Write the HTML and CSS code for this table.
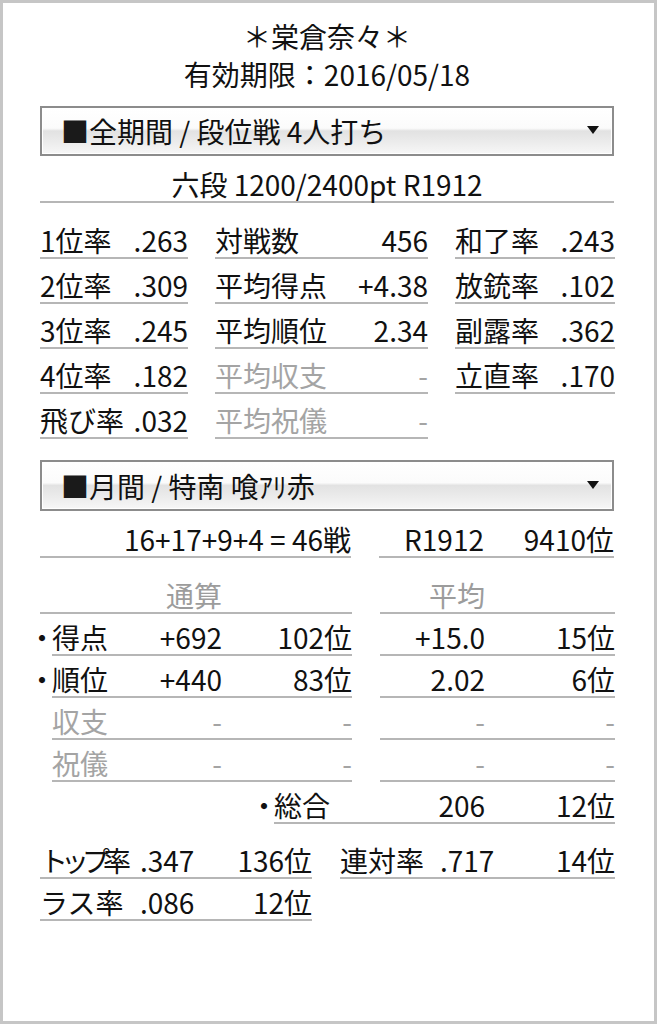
FILE: index.html
```html
<!DOCTYPE html>
<html lang="ja">
<head>
<meta charset="utf-8">
<title>成績</title>
<link rel="stylesheet" href="styles.css">
</head>
<body>
<div class="panel">
  <div class="head">
    <div class="line">＊棠倉奈々＊</div>
    <div class="line">有効期限：2016/05/18</div>
  </div>

  <div class="select s1">
    <span class="sq">■</span><span class="sel-text">全期間 / 段位戦 4人打ち</span>
    <svg class="arrow" width="12" height="8" viewBox="0 0 12 8"><path d="M0 0H12L6 8Z" fill="#111"/></svg>
  </div>

  <div class="rank">六段 1200/2400pt R1912</div>

  <div class="stats">
    <div class="cell"><span>1位率</span><span>.263</span></div>
    <div class="cell"><span>対戦数</span><span>456</span></div>
    <div class="cell"><span>和了率</span><span>.243</span></div>

    <div class="cell"><span>2位率</span><span>.309</span></div>
    <div class="cell"><span>平均得点</span><span>+4.38</span></div>
    <div class="cell"><span>放銃率</span><span>.102</span></div>

    <div class="cell"><span>3位率</span><span>.245</span></div>
    <div class="cell"><span>平均順位</span><span>2.34</span></div>
    <div class="cell"><span>副露率</span><span>.362</span></div>

    <div class="cell"><span>4位率</span><span>.182</span></div>
    <div class="cell off"><span>平均収支</span><span>-</span></div>
    <div class="cell"><span>立直率</span><span>.170</span></div>

    <div class="cell"><span>飛び率</span><span>.032</span></div>
    <div class="cell off"><span>平均祝儀</span><span>-</span></div>
    <div class="cell blank"></div>
  </div>

  <div class="select s2">
    <span class="sq">■</span><span class="sel-text">月間 / 特南 喰ｱﾘ赤</span>
    <svg class="arrow" width="12" height="8" viewBox="0 0 12 8"><path d="M0 0H12L6 8Z" fill="#111"/></svg>
  </div>

  <div class="month">
    <div class="mrow r-games">
      <div class="seg games">16+17+9+4 = 46戦</div>
      <div class="seg right"><span>R1912</span><span>9410位</span></div>
    </div>

    <div class="mrow r-head">
      <div class="seg left wide"><span></span><span class="hd">通算</span><span></span></div>
      <div class="seg right"><span class="hd">平均</span><span></span></div>
    </div>

    <div class="mrow r-data">
      <div class="seg left"><span><span class="dot">・</span>得点</span><span>+692</span><span>102位</span></div>
      <div class="seg right"><span>+15.0</span><span>15位</span></div>
    </div>

    <div class="mrow r-data">
      <div class="seg left"><span><span class="dot">・</span>順位</span><span>+440</span><span>83位</span></div>
      <div class="seg right"><span>2.02</span><span>6位</span></div>
    </div>

    <div class="mrow r-data off">
      <div class="seg left"><span>収支</span><span>-</span><span>-</span></div>
      <div class="seg right"><span>-</span><span>-</span></div>
    </div>

    <div class="mrow r-data off">
      <div class="seg left"><span>祝儀</span><span>-</span><span>-</span></div>
      <div class="seg right"><span>-</span><span>-</span></div>
    </div>

    <div class="mrow r-data">
      <div class="seg total"><span><span class="dot">・</span>総合</span><span>206</span><span>12位</span></div>
    </div>

    <div class="mrow r-top">
      <div class="seg rate"><span class="tight">トップ率</span><span>.347</span><span>136位</span></div>
      <div class="seg rate rate-r"><span>連対率</span><span>.717</span><span>14位</span></div>
    </div>

    <div class="mrow r-data">
      <div class="seg rate"><span>ラス率</span><span>.086</span><span>12位</span></div>
    </div>
  </div>
</div>
</body>
</html>
```

FILE: styles.css
```css
* {
  box-sizing: border-box;
}

html, body {
  margin: 0;
  padding: 0;
  background: #fff;
}

body {
  font-family: "Noto Sans CJK JP", "Noto Sans CJK SC", sans-serif;
  font-size: 28px;
  color: #111;
}

.panel {
  width: 657px;
  height: 1024px;
  border: 3px solid #c6c6c6;
  padding: 0 40px 0 37px;
  overflow: hidden;
}

.head {
  padding-top: 14px;
  text-align: center;
}

.head .line {
  line-height: 38px;
  height: 38px;
}

.select {
  display: flex;
  align-items: center;
  height: 50px;
  border: 2px solid #8c8c8c;
  box-shadow: inset 0 0 0 1px #fff;
  background: linear-gradient(to bottom, #ffffff 0%, #fbfbfb 44%, #e2e2e2 50%, #ececec 75%, #f7f7f7 100%);
  padding: 0 13px 0 19px;
  line-height: 30px;
  white-space: nowrap;
}

.s1 {
  margin-top: 13px;
}

.s2 {
  margin-top: 21px;
  height: 51px;
}

.sq {
  color: #1a1a1a;
}

.sel-text {
  flex: 1;
}

.arrow {
  display: block;
  margin-top: -2px;
}

.rank {
  height: 47px;
  border-bottom: 2px solid #b6b6b6;
  text-align: center;
  line-height: 30px;
  padding-top: 13px;
}

.stats {
  margin-top: 11px;
  display: grid;
  grid-template-columns: 148px 213px 160px;
  column-gap: 27px;
  grid-auto-rows: 45px;
}

.cell {
  display: flex;
  justify-content: space-between;
  align-items: flex-end;
  border-bottom: 2px solid #b6b6b6;
  line-height: 30px;
  padding-bottom: 2px;
  white-space: nowrap;
}

.cell.blank {
  border-bottom: none;
}

.off {
  color: #a4a4a4;
}

.mrow {
  display: flex;
  align-items: stretch;
}

.r-games { height: 47px; }
.r-head { height: 56px; }
.r-data { height: 42px; }
.r-top { height: 55px; }

.seg {
  display: grid;
  align-items: end;
  border-bottom: 2px solid #b6b6b6;
  line-height: 30px;
  padding-bottom: 2px;
  white-space: nowrap;
}

.seg > span {
  text-align: right;
}

.seg > span:first-child {
  text-align: left;
}

.games {
  width: 312px;
  display: flex;
  justify-content: flex-end;
  align-items: flex-end;
}

.left {
  margin-left: 12px;
  width: 300px;
  grid-template-columns: 80px 90px 130px;
}

.left.wide {
  margin-left: 0;
  width: 312px;
  grid-template-columns: 92px 90px 130px;
}

.right {
  margin-left: 28px;
  width: 235px;
  grid-template-columns: 105px 130px;
}

.seg.right > span:first-child {
  text-align: right;
}

.seg > span.hd {
  color: #9c9c9c;
  text-align: right;
}

.total {
  margin-left: 234px;
  width: 341px;
  grid-template-columns: 106px 105px 130px;
}

.rate {
  width: 272px;
  grid-template-columns: 100px 53px 119px;
}

.rate-r {
  margin-left: 28px;
  width: 275px;
  grid-template-columns: 100px 53px 122px;
}

.tight {
  letter-spacing: -7px;
}

.dot {
  display: inline-block;
  font-size: 24px;
  width: 22px;
  margin-left: -22px;
  vertical-align: top;
  line-height: 30px;
  font-weight: 700;
}
```
